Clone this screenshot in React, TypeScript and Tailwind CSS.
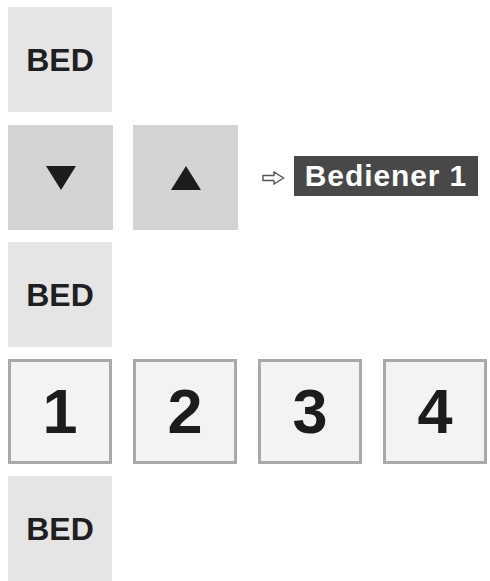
const font = { fontFamily: '"Liberation Sans", Arial, sans-serif' };

function BedKey() {
  return (
    <div className="w-[104px] h-[105px] bg-[#e5e5e5] flex items-center justify-center">
      <span className="text-[32px] font-bold text-[#1f1f1f] leading-none" style={font}>
        BED
      </span>
    </div>
  );
}

function ArrowKey({ dir }: { dir: 'up' | 'down' }) {
  return (
    <div className="w-[105px] h-[105px] bg-[#d4d4d4] flex items-center justify-center">
      <svg width="30" height="24" viewBox="0 0 30 24">
        {dir === 'down' ? (
          <polygon points="0,0 30,0 15,24" fill="#1c1c1c" />
        ) : (
          <polygon points="15,0 30,24 0,24" fill="#1c1c1c" />
        )}
      </svg>
    </div>
  );
}

function NumberKey({ n }: { n: number }) {
  return (
    <div className="w-[104px] h-[105px] bg-[#f3f3f3] border-[3px] border-[#a9a9a9] flex items-center justify-center">
      <span className="text-[63px] font-bold text-[#1c1c1c] leading-none" style={font}>
        {n}
      </span>
    </div>
  );
}

export default function App() {
  return (
    <div className="w-[490px] h-[581px] bg-white pl-[8px] pt-[7px] flex flex-col gap-[12px]">
      <BedKey />
      <div className="flex items-center mt-[1px]">
        <ArrowKey dir="down" />
        <div className="ml-[20px]">
          <ArrowKey dir="up" />
        </div>
        <svg className="ml-[24px]" width="23" height="14" viewBox="0 0 23 14">
          <path
            d="M1 4.5 H12 V1 L21.5 7 L12 13 V9.5 H1 Z"
            fill="white"
            stroke="#555"
            strokeWidth="1.4"
            strokeLinejoin="miter"
          />
        </svg>
        <div className="ml-[9px] mb-[4px] h-[40px] w-[184px] bg-[#484848] flex items-center justify-center">
          <span className="text-[30px] font-bold text-white leading-none tracking-[0.9px]" style={font}>
            Bediener 1
          </span>
        </div>
      </div>
      <BedKey />
      <div className="flex gap-[21px]">
        <NumberKey n={1} />
        <NumberKey n={2} />
        <NumberKey n={3} />
        <NumberKey n={4} />
      </div>
      <BedKey />
    </div>
  );
}
